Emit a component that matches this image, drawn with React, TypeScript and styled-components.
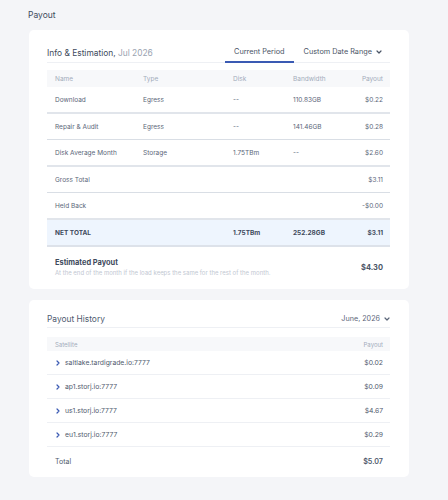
import React from "react";
import styled, { createGlobalStyle } from "styled-components";

const GlobalStyle = createGlobalStyle`
  html, body {
    margin: 0;
    padding: 0;
    background: #f4f5f8;
    font-family: Inter, "Noto Sans", "Liberation Sans", sans-serif;
    -webkit-font-smoothing: antialiased;
  }
`;

type EstimationRow = {
  name: string;
  type: string;
  disk: string;
  bandwidth: string;
  payout: string;
  thick?: boolean;
};

const estimationRows: EstimationRow[] = [
  { name: "Download", type: "Egress", disk: "--", bandwidth: "110.83GB", payout: "$0.22", thick: true },
  { name: "Repair & Audit", type: "Egress", disk: "--", bandwidth: "141.46GB", payout: "$0.28" },
  { name: "Disk Average Month", type: "Storage", disk: "1.75TBm", bandwidth: "--", payout: "$2.60", thick: true },
  { name: "Gross Total", type: "", disk: "", bandwidth: "", payout: "$3.11" },
  { name: "Held Back", type: "", disk: "", bandwidth: "", payout: "-$0.00", thick: true },
];

const satellites = [
  { name: "saltlake.tardigrade.io:7777", payout: "$0.02" },
  { name: "ap1.storj.io:7777", payout: "$0.09" },
  { name: "us1.storj.io:7777", payout: "$4.67" },
  { name: "eu1.storj.io:7777", payout: "$0.29" },
];

const Chevron = ({ dir = "down" }: { dir?: "down" | "right" }) => (
  <svg width="6" height="6" viewBox="0 0 6 6" style={{ transform: dir === "right" ? "rotate(-90deg)" : undefined }}>
    <path d="M1 2 L3 4 L5 2" fill="none" stroke="currentColor" strokeWidth="1.2" strokeLinecap="round" strokeLinejoin="round" />
  </svg>
);

export default function App() {
  return (
    <Page>
      <GlobalStyle />
      <SectionTitle>Payout</SectionTitle>
      <Card>
        <CardHeader>
          <CardTitle>
            Info &amp; Estimation, <Muted>Jul 2026</Muted>
          </CardTitle>
          <Tabs>
            <Tab active>Current Period</Tab>
            <Tab dropdown>
              Custom Date Range <Chevron />
            </Tab>
          </Tabs>
        </CardHeader>
        <Table>
          <HeadRow>
            <span>Name</span>
            <span>Type</span>
            <span>Disk</span>
            <span>Bandwidth</span>
            <Right>Payout</Right>
          </HeadRow>
          {estimationRows.map((row) => (
            <BodyRow key={row.name} thick={row.thick}>
              <span>{row.name}</span>
              <span>{row.type}</span>
              <span>{row.disk}</span>
              <span>{row.bandwidth}</span>
              <Right>{row.payout}</Right>
            </BodyRow>
          ))}
          <TotalRow>
            <span>NET TOTAL</span>
            <span />
            <span>1.75TBm</span>
            <span>252.28GB</span>
            <Right>$3.11</Right>
          </TotalRow>
        </Table>
        <Estimated>
          <div>
            <EstTitle>Estimated Payout</EstTitle>
            <EstNote>At the end of the month if the load keeps the same for the rest of the month.</EstNote>
          </div>
          <EstValue>$4.30</EstValue>
        </Estimated>
      </Card>

      <Card>
        <HistoryHeader>
          <HistoryTitle>Payout History</HistoryTitle>
          <MonthPicker>
            June, 2026 <Chevron />
          </MonthPicker>
        </HistoryHeader>
        <HistoryHead>
          <span>Satellite</span>
          <span>Payout</span>
        </HistoryHead>
        {satellites.map((s) => (
          <HistoryRow key={s.name}>
            <SatName>
              <Arrow>
                <Chevron dir="right" />
              </Arrow>
              {s.name}
            </SatName>
            <span>{s.payout}</span>
          </HistoryRow>
        ))}
        <HistoryTotal>
          <span>Total</span>
          <strong>$5.07</strong>
        </HistoryTotal>
      </Card>

      <SectionTitle spaced>Held Amount</SectionTitle>
    </Page>
  );
}

const Page = styled.div`
  padding: 9px 39px 20px 29px;
  display: flex;
  flex-direction: column;
  gap: 11px;
`;

const SectionTitle = styled.div<{ spaced?: boolean }>`
  font-size: 8.5px;
  color: #3e4a5c;
  line-height: 12px;
  margin-left: -1px;
  margin-bottom: -2px;
  margin-top: ${(p) => (p.spaced ? "13px" : "0")};
`;

const Card = styled.div`
  background: #fff;
  border-radius: 5px;
  padding: 14px 19px 0 18px;
`;

const CardHeader = styled.div`
  display: flex;
  justify-content: space-between;
  align-items: stretch;
  height: 18px;
  border-bottom: 1px solid #eef0f4;
`;

const CardTitle = styled.div`
  font-size: 8.4px;
  color: #3e4a5c;
  display: flex;
  align-items: center;
  white-space: pre;
`;

const HistoryTitle = styled(CardTitle)`
  color: #4f5b70;
`;

const Muted = styled.span`
  color: #9aa3b1;
`;

const Tabs = styled.div`
  display: flex;
  align-items: stretch;
`;

const Tab = styled.div<{ active?: boolean; dropdown?: boolean }>`
  font-size: 7.3px;
  color: #4a5566;
  display: flex;
  align-items: center;
  gap: 4px;
  padding: 0 ${(p) => (p.dropdown ? "8px" : "9px")} 2px ${(p) => (p.dropdown ? "10px" : "9px")};
  margin-bottom: -1px;
  border-bottom: 2px solid ${(p) => (p.active ? "#3a5ab3" : "transparent")};
`;

const Table = styled.div`
  margin-top: 7px;
`;

const grid = `
  display: grid;
  grid-template-columns: 88px 90px 60px 1fr auto;
  align-items: center;
  padding: 0 7px 0 8px;
`;

const HeadRow = styled.div`
  ${grid};
  height: 17px;
  background: #f7f8fa;
  font-size: 6.5px;
  color: #a3acba;
`;

const BodyRow = styled.div<{ thick?: boolean }>`
  ${grid};
  height: 25px;
  font-size: 6.5px;
  color: #5b6679;
  border-bottom: ${(p) => (p.thick ? "2px solid #e1e5eb" : "1px solid #d9dee5")};
`;

const TotalRow = styled.div`
  ${grid};
  height: 25px;
  font-size: 6.5px;
  font-weight: 700;
  color: #3e4a5c;
  background: #eef5fe;
  border-bottom: 2px solid #dde2ea;
`;

const Right = styled.span`
  text-align: right;
`;

const Estimated = styled.div`
  display: flex;
  justify-content: space-between;
  align-items: center;
  padding: 11px 7px 12px 8px;
`;

const EstTitle = styled.div`
  font-size: 7.4px;
  font-weight: 700;
  color: #3e4a5c;
  line-height: 10px;
`;

const EstNote = styled.div`
  font-size: 6px;
  color: #c2c8d2;
  line-height: 9px;
`;

const EstValue = styled.div`
  font-size: 7.5px;
  font-weight: 700;
  color: #4a5566;
`;

const HistoryHeader = styled.div`
  display: flex;
  justify-content: space-between;
  align-items: center;
  height: 9px;
  padding-bottom: 4px;
  border-bottom: 1px solid #eef0f4;
`;

const MonthPicker = styled.div`
  font-size: 7.2px;
  color: #5b6679;
  display: flex;
  align-items: center;
  gap: 4px;
`;

const HistoryHead = styled.div`
  display: flex;
  justify-content: space-between;
  align-items: center;
  margin-top: 9px;
  height: 14px;
  padding: 0 7px 0 8px;
  background: #f7f8fa;
  font-size: 6px;
  color: #a3acba;
`;

const HistoryRow = styled.div`
  display: flex;
  justify-content: space-between;
  align-items: center;
  height: 23px;
  padding: 0 7px 0 8px;
  border-bottom: 1px solid #eef0f4;
  font-size: 6.8px;
  color: #4f5a6d;
`;

const SatName = styled.span`
  display: flex;
  align-items: center;
  gap: 4px;
`;

const Arrow = styled.span`
  color: #3a5ab3;
  display: flex;
  width: 6px;
`;

const HistoryTotal = styled.div`
  display: flex;
  justify-content: space-between;
  align-items: center;
  height: 28px;
  padding: 0 7px 2px 8px;
  font-size: 7px;
  color: #4f5a6d;

  strong {
    font-weight: 600;
    font-size: 7.2px;
  }
`;
